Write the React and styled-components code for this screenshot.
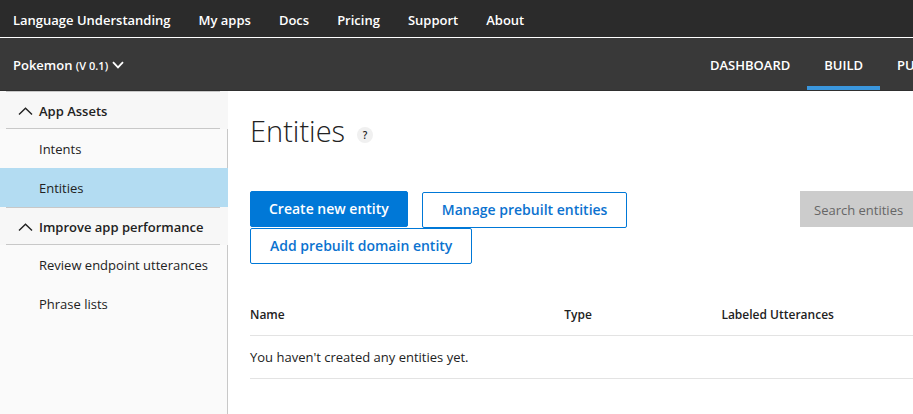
import React from 'react';
import styled, { createGlobalStyle } from 'styled-components';

const GlobalStyle = createGlobalStyle`
  * { box-sizing: border-box; }
  html, body, #root { min-height: 100vh; }
  body {
    margin: 0;
    overflow: hidden;
    background: #fff;
    color: #222;
    font: 13px/20px 'Open Sans', 'Noto Sans', sans-serif;
  }
  button, input { font: inherit; }
  a { color: inherit; text-decoration: none; }
`;

const Page = styled.div`
  display: flex;
  flex-direction: column;
  min-height: 100vh;
`;

const TopBar = styled.header`
  display: flex;
  align-items: center;
  gap: 28px;
  height: 38px;
  padding: 3px 13px 0;
  background: #2b2b2b;
  border-bottom: 1px solid #fff;
  color: #fff;
  font-weight: 600;
  white-space: nowrap;
`;

const AppBar = styled.div`
  display: flex;
  justify-content: space-between;
  height: 53px;
  padding-left: 13px;
  background: #393939;
  border-bottom: 1px solid #2f2f2f;
  color: #fff;
  font-weight: 600;
  overflow: hidden;
`;

const AppSwitch = styled.button`
  display: flex;
  align-items: center;
  gap: 4px;
  padding: 2px 0 0;
  border: 0;
  background: none;
  color: inherit;
  font-weight: 600;
`;

const Version = styled.span`
  font-size: 11px;
`;

const SectionNav = styled.nav`
  display: flex;
  flex: none;
  width: 220px;
`;

const SectionLink = styled.a`
  display: flex;
  align-items: center;
  flex: none;
  padding: 6px 17px 0;
  border-bottom: 4px solid ${(p) => (p.$active ? '#3a96dd' : 'transparent')};
`;

const Body = styled.div`
  display: flex;
  flex: 1;
`;

const Sidebar = styled.nav`
  flex: none;
  width: 228px;
  background: linear-gradient(to left, #c8c8c8 1px, #fafafa 1px);
`;

const GroupHeader = styled.button`
  display: block;
  width: 100%;
  height: 38px;
  padding: 0 8px 0 6px;
  border: 0;
  background: #f7f7f7;
  color: #222;
  font-weight: 600;
  text-align: left;
`;

const GroupLabel = styled.span`
  display: flex;
  align-items: center;
  gap: 6px;
  height: 38px;
  padding: 1px 0 0 12px;
  border: solid #c8c8c8;
  border-width: 1px 0;
  white-space: nowrap;
`;

const SideList = styled.ul`
  margin: 0;
  padding: 0;
  list-style: none;
`;

const SideLink = styled.a`
  display: flex;
  align-items: center;
  height: 39px;
  padding-left: 39px;
  background: ${(p) => (p.$active ? '#b3dcf2' : 'transparent')};
  white-space: nowrap;
`;

const Main = styled.main`
  flex: 1;
  min-width: 0;
  padding: 20px 0 0 22px;
`;

const TitleRow = styled.div`
  display: flex;
  align-items: center;
  gap: 12px;
  height: 40px;
`;

const Title = styled.h1`
  margin: 0;
  font-size: 29px;
  line-height: 40px;
  font-weight: 300;
`;

const Help = styled.button`
  width: 16px;
  height: 16px;
  margin-top: 8px;
  padding: 0;
  border: 0;
  border-radius: 50%;
  background: #f0f0f0;
  color: #222;
  font-size: 10px;
  line-height: 16px;
  font-weight: 600;
`;

const Toolbar = styled.div`
  display: flex;
  align-items: flex-start;
  justify-content: space-between;
  margin-top: 40px;
`;

const Actions = styled.div`
  display: flex;
  flex: 1;
  flex-wrap: wrap;
  align-items: flex-end;
  column-gap: 14px;
`;

const Button = styled.button`
  height: 36px;
  margin-bottom: ${(p) => (p.$primary ? '1px' : '0')};
  padding: 0 ${(p) => (p.$primary ? '18px' : '19px')};
  border: 1px solid #0078d7;
  border-radius: 2px;
  background: ${(p) => (p.$primary ? '#0078d7' : '#fff')};
  color: ${(p) => (p.$primary ? '#fff' : '#0b72cf')};
  font-size: 14px;
  font-weight: 600;
  white-space: nowrap;
`;

const Search = styled.input`
  flex: none;
  width: 113px;
  height: 36px;
  padding: 2px 0 0 14px;
  border: 0;
  border-radius: 0;
  background: #ccc;
  &::placeholder { color: #666; opacity: 1; }
`;

const Table = styled.table`
  width: 100%;
  margin-top: 32px;
  border-collapse: collapse;
  table-layout: fixed;
  text-align: left;
`;

const HeadCell = styled.th`
  width: ${(p) => p.$width};
  height: 39px;
  padding: 0;
  border-bottom: 1px solid #e3e3e3;
  font-size: 12px;
  font-weight: 600;
`;

const Cell = styled.td`
  height: 43px;
  padding: 0;
  border-bottom: 1px solid #e3e3e3;
`;

const Chevron = ({ up, size, stroke }) => (
  <svg width={size} height="8" viewBox={`0 0 ${size} 8`} fill="none" stroke="currentColor" strokeWidth={stroke} aria-hidden="true">
    <path d={up ? `M1 7.5 L${size / 2} 1.2 L${size - 1} 7.5` : `M1 1.2 L${size / 2} 6.4 L${size - 1} 1.2`} />
  </svg>
);

const topLinks = ['Language Understanding', 'My apps', 'Docs', 'Pricing', 'Support', 'About'];
const sections = ['DASHBOARD', 'BUILD', 'PUBLISH'];
const groups = [
  { label: 'App Assets', items: ['Intents', 'Entities'] },
  { label: 'Improve app performance', items: ['Review endpoint utterances', 'Phrase lists'] },
];
const columns = [
  { label: 'Name', width: '47.4%' },
  { label: 'Type', width: '23.7%' },
  { label: 'Labeled Utterances', width: 'auto' },
];

export default function App() {
  return (
    <Page>
      <GlobalStyle />
      <TopBar>
        {topLinks.map((t) => <a key={t} href="#">{t}</a>)}
      </TopBar>
      <AppBar>
        <AppSwitch>
          <span>Pokemon <Version>(V 0.1)</Version></span>
          <Chevron size={12} stroke={1.8} />
        </AppSwitch>
        <SectionNav>
          {sections.map((s) => <SectionLink key={s} href="#" $active={s === 'BUILD'}>{s}</SectionLink>)}
        </SectionNav>
      </AppBar>
      <Body>
        <Sidebar>
          {groups.map((g) => (
            <React.Fragment key={g.label}>
              <GroupHeader aria-expanded="true">
                <GroupLabel><Chevron up size={15} stroke={1.4} />{g.label}</GroupLabel>
              </GroupHeader>
              <SideList>
                {g.items.map((i) => (
                  <li key={i}><SideLink href="#" $active={i === 'Entities'}>{i}</SideLink></li>
                ))}
              </SideList>
            </React.Fragment>
          ))}
        </Sidebar>
        <Main>
          <TitleRow>
            <Title>Entities</Title>
            <Help aria-label="Help">?</Help>
          </TitleRow>
          <Toolbar>
            <Actions>
              <Button $primary>Create new entity</Button>
              <Button>Manage prebuilt entities</Button>
              <Button>Add prebuilt domain entity</Button>
            </Actions>
            <Search type="text" placeholder="Search entities" aria-label="Search entities" />
          </Toolbar>
          <Table>
            <thead>
              <tr>{columns.map((c) => <HeadCell key={c.label} $width={c.width}>{c.label}</HeadCell>)}</tr>
            </thead>
            <tbody>
              <tr><Cell colSpan={3}>You haven't created any entities yet.</Cell></tr>
            </tbody>
          </Table>
        </Main>
      </Body>
    </Page>
  );
}
